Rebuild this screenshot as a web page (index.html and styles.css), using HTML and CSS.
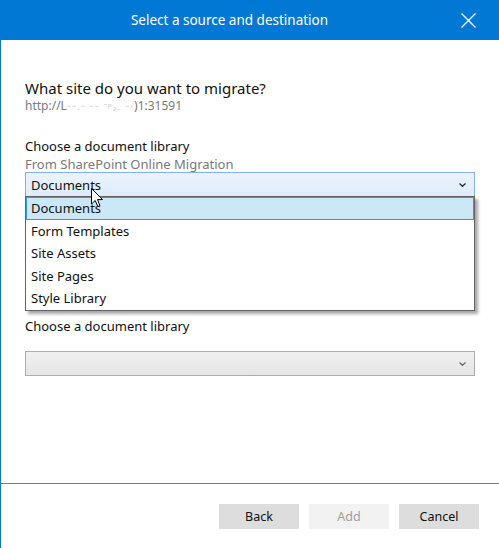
FILE: index.html
```html
<!DOCTYPE html>
<html>
<head>
<meta charset="utf-8">
<link rel="stylesheet" href="styles.css">
</head>
<body>
<div class="window">
  <header class="titlebar">
    <span class="title">Select a source and destination</span>
    <span class="close">
      <svg width="15" height="15" viewBox="0 0 15 15"><path d="M0.5 0.5 L14.5 14.5 M14.5 0.5 L0.5 14.5" stroke="#fff" stroke-width="1.4" fill="none"/></svg>
    </span>
  </header>
  <main class="content">
    <h2 class="question">What site do you want to migrate?</h2>
    <p class="url">http://L<span class="blur">ᵕᵕ.ᵕ ᵕᵕ ⁻ᵖ₂₋ ᵕ·</span>)1:31591</p>

    <p class="label first">Choose a document library</p>
    <p class="sub">From SharePoint Online Migration</p>
    <div class="select-wrap">
      <div class="select open">
        <span>Documents</span>
        <svg class="chev" width="7" height="4" viewBox="0 0 7 4"><path d="M0.5 0.5 L3.5 3.3 L6.5 0.5" stroke="#222" stroke-width="1.2" fill="none"/></svg>
      </div>
      <ul class="dropdown">
        <li class="item selected">Documents</li>
        <li class="item">Form Templates</li>
        <li class="item">Site Assets</li>
        <li class="item">Site Pages</li>
        <li class="item">Style Library</li>
      </ul>
      <svg class="cursor" width="13" height="20" viewBox="0 0 13 20"><path d="M0.5 0.5 L0.5 16 L4.2 12.5 L6.8 18.6 L9 17.6 L6.5 11.6 L11.5 11.6 Z" fill="#fff" stroke="#000" stroke-width="1"/></svg>
    </div>

    <p class="label second">Choose a document library</p>
    <div class="select disabled">
      <span></span>
      <svg class="chev" width="7" height="4" viewBox="0 0 7 4"><path d="M0.5 0.5 L3.5 3.3 L6.5 0.5" stroke="#666" stroke-width="1.2" fill="none"/></svg>
    </div>
  </main>
  <footer class="footer">
    <button class="btn">Back</button>
    <button class="btn btn-disabled">Add</button>
    <button class="btn">Cancel</button>
  </footer>
</div>
</body>
</html>
```
FILE: styles.css
```css
* { box-sizing: border-box; }
html, body { margin: 0; padding: 0; background: #fff; }
body { font-family: "Noto Sans", "Open Sans", sans-serif; color: #1a1a1a; }

.window {
  width: 499px;
  height: 548px;
  display: flex;
  flex-direction: column;
  border-left: 1px solid #0078d4;
  overflow: hidden;
}

.titlebar {
  height: 40px;
  flex: none;
  background: #0078d4;
  margin-left: -1px;
  display: flex;
  align-items: center;
  justify-content: center;
  position: relative;
}
.title {
  color: #fff;
  font-size: 13.5px;
  margin-left: -40px;
}
.close {
  position: absolute;
  left: 461px;
  top: 13px;
  width: 15px;
  height: 15px;
  display: flex;
}

.content {
  flex: 1;
  padding: 0 24px 0 24px;
}
.question {
  margin: 38px 0 0;
  font-size: 15px;
  font-weight: normal;
  line-height: 20px;
  color: #111;
}
.url {
  margin: 0;
  font-size: 12px;
  line-height: 16px;
  color: #7a7a7a;
}
.url .blur { color: #c8c8c8; font-size: 10px; letter-spacing: 1px; }

.label {
  margin: 0;
  font-size: 13px;
  line-height: 16px;
  color: #111;
}
.label.first { margin-top: 23px; line-height: 18px; }
.label.second { margin-top: 121px; }
.sub {
  margin: 0;
  font-size: 13px;
  line-height: 18px;
  color: #7a7a7a;
}

.select-wrap { position: relative; margin-top: -1px; }
.select {
  width: 450px;
  height: 25px;
  border: 1px solid #adadad;
  display: flex;
  align-items: center;
  justify-content: space-between;
  padding: 0 8px 0 5px;
  font-size: 13px;
  color: #111;
}
.select.open {
  border-color: #7eb4ea;
  background: linear-gradient(#ecf4fc, #dcecfc);
}
.select.disabled {
  margin-top: 17px;
  background: linear-gradient(#f0f0f0, #e5e5e5);
}

.dropdown {
  position: absolute;
  left: 0;
  top: 24px;
  width: 450px;
  margin: 0;
  padding: 0;
  list-style: none;
  background: #fff;
  border: 1px solid #646464;
  box-shadow: 3px 3px 3px rgba(0,0,0,0.35);
}
.item {
  height: 22.6px;
  line-height: 22px;
  padding-left: 5px;
  font-size: 13px;
  color: #111;
}
.item.selected {
  background: #cbe8f6;
  border: 1px solid #26a0da;
  padding-left: 4px;
  line-height: 20px;
}

.cursor {
  position: absolute;
  left: 66px;
  top: 16px;
}

.footer {
  flex: none;
  height: 65px;
  border-top: 1px solid #7a7a7a;
  display: flex;
  justify-content: flex-end;
  align-items: flex-start;
  gap: 10px;
  padding: 20px 20px 0 0;
}
.btn {
  width: 80px;
  height: 25px;
  border: none;
  background: #dddddd;
  font-family: "Noto Sans", "Open Sans", sans-serif;
  font-size: 12.5px;
  color: #111;
  padding: 0;
}
.btn-disabled {
  background: #f2f2f2;
  color: #a0a0a0;
}
```
